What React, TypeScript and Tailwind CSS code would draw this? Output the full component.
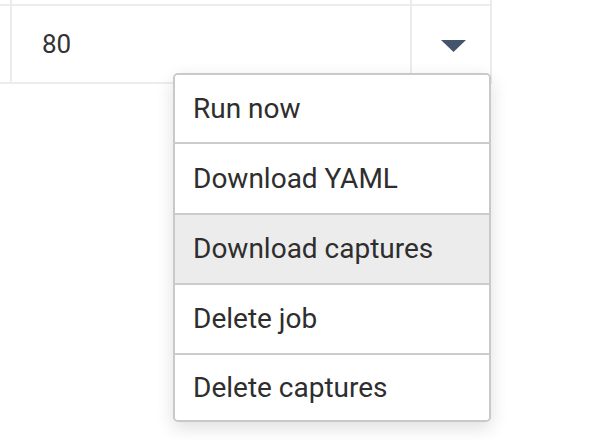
import React from "react";

const items = [
	{ label: "Run now", h: "h-[69px]" },
	{ label: "Download YAML", h: "h-[71px]" },
	{ label: "Download captures", h: "h-[70px]", active: true },
	{ label: "Delete job", h: "h-[70px]" },
	{ label: "Delete captures", h: "h-[65px]" },
];

const App = () => {
	return (
		<div className="relative w-[606px] h-[440px] bg-white overflow-hidden font-['Roboto',sans-serif] text-[#333]">
			<div className="w-[492px]">
				<div className="flex h-[4px]">
					<div className="w-[12px] border-r-2 border-[#ececec]"></div>
					<div className="flex-1 border-r-2 border-[#ececec]"></div>
					<div className="w-[80px] border-r-2 border-[#ececec]"></div>
				</div>
				<div className="flex h-[80px] border-y-2 border-[#ececec]">
					<div className="w-[12px] border-r-2 border-[#ececec]"></div>
					<div className="flex-1 flex items-center pl-[30px] text-[26px] border-r-2 border-[#ececec]">
						80
					</div>
					<div className="w-[80px] flex items-center justify-center pl-[5px] pt-[3px] border-r-2 border-[#ececec]">
						<svg width="25" height="12" viewBox="0 0 25 12">
							<path d="M0 0 L25 0 L12.5 12 Z" fill="#44546a" />
						</svg>
					</div>
				</div>
			</div>

			<div className="absolute left-[173px] top-[73px] w-[318px] bg-white border-2 border-[#c9c9c9] rounded-[5px] overflow-hidden shadow-[0_6px_18px_rgba(0,0,0,0.13)]">
				{items.map((item, idx) => (
					<div
						key={item.label}
						className={`${item.h} flex items-center pl-[18px] text-[28px] text-[#2e2e2e] ${
							item.active ? "bg-[#ececec]" : "bg-white"
						} ${idx < items.length - 1 ? "border-b-2 border-[#cccccc]" : ""}`}
					>
						{item.label}
					</div>
				))}
			</div>
		</div>
	);
};

export default App;
